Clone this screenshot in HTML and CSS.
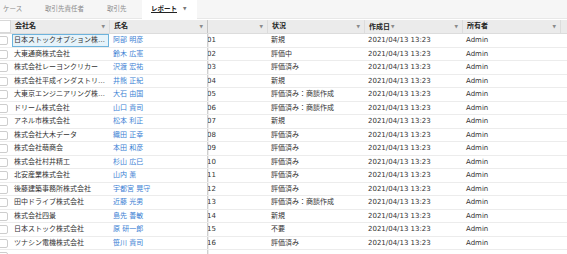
FILE: index.html
```html
<!DOCTYPE html>
<html>
	<head>
		<meta charset="UTF-8">
		<title>レポート</title>
		<link rel="stylesheet" href="styles.css">
	</head>
	<body>
		<div class="tabs">
			<span class="tab t1">ケース</span>
			<span class="tab t2">取引先責任者</span>
			<span class="tab t3">取引先</span>
			<span class="tab t4 active"><u>レポート</u><i class="caret">▼</i></span>
		</div>

		<div class="grid">
			<!-- ヘッダー -->
			<div class="row head">
				<div class="cell cb"></div>
				<div class="cell">会社名<i class="caret">▼</i></div>
				<div class="cell frozen">氏名<i class="caret">▼</i></div>
				<div class="cell"><i class="caret">▼</i></div>
				<div class="cell">状況<i class="caret">▼</i></div>
				<div class="cell">作成日<b class="sort">▼</b><i class="caret">▼</i></div>
				<div class="cell">所有者<i class="caret">▼</i></div>
				<div class="cell"></div>
			</div>

			<div class="row">
				<div class="cell cb"><span class="box"></span></div>
				<div class="cell co selected">日本ストックオプション株式会社</div>
				<div class="cell nm frozen">阿部 明彦</div>
				<div class="cell no">01</div>
				<div class="cell">新規</div>
				<div class="cell">2021/04/13 13:23</div>
				<div class="cell">Admin</div>
				<div class="cell"></div>
			</div>
			<div class="row">
				<div class="cell cb"><span class="box"></span></div>
				<div class="cell co">大東通商株式会社</div>
				<div class="cell nm frozen">鈴木 広憲</div>
				<div class="cell no">02</div>
				<div class="cell">評価中</div>
				<div class="cell">2021/04/13 13:23</div>
				<div class="cell">Admin</div>
				<div class="cell"></div>
			</div>
			<div class="row">
				<div class="cell cb"><span class="box"></span></div>
				<div class="cell co">株式会社レーヨンクリカー</div>
				<div class="cell nm frozen">沢渡 宏祐</div>
				<div class="cell no">03</div>
				<div class="cell">評価済み</div>
				<div class="cell">2021/04/13 13:23</div>
				<div class="cell">Admin</div>
				<div class="cell"></div>
			</div>
			<div class="row">
				<div class="cell cb"><span class="box"></span></div>
				<div class="cell co">株式会社平成インダストリイズ</div>
				<div class="cell nm frozen">井熊 正紀</div>
				<div class="cell no">04</div>
				<div class="cell">新規</div>
				<div class="cell">2021/04/13 13:23</div>
				<div class="cell">Admin</div>
				<div class="cell"></div>
			</div>
			<div class="row">
				<div class="cell cb"><span class="box"></span></div>
				<div class="cell co">大東京エンジニアリング株式会社</div>
				<div class="cell nm frozen">大石 由国</div>
				<div class="cell no">05</div>
				<div class="cell">評価済み：商談作成</div>
				<div class="cell">2021/04/13 13:23</div>
				<div class="cell">Admin</div>
				<div class="cell"></div>
			</div>
			<div class="row">
				<div class="cell cb"><span class="box"></span></div>
				<div class="cell co">ドリーム株式会社</div>
				<div class="cell nm frozen">山口 貴司</div>
				<div class="cell no">06</div>
				<div class="cell">評価済み：商談作成</div>
				<div class="cell">2021/04/13 13:23</div>
				<div class="cell">Admin</div>
				<div class="cell"></div>
			</div>
			<div class="row">
				<div class="cell cb"><span class="box"></span></div>
				<div class="cell co">アネル市株式会社</div>
				<div class="cell nm frozen">松本 利正</div>
				<div class="cell no">07</div>
				<div class="cell">新規</div>
				<div class="cell">2021/04/13 13:23</div>
				<div class="cell">Admin</div>
				<div class="cell"></div>
			</div>
			<div class="row">
				<div class="cell cb"><span class="box"></span></div>
				<div class="cell co">株式会社大木データ</div>
				<div class="cell nm frozen">織田 正幸</div>
				<div class="cell no">08</div>
				<div class="cell">評価済み</div>
				<div class="cell">2021/04/13 13:23</div>
				<div class="cell">Admin</div>
				<div class="cell"></div>
			</div>
			<div class="row">
				<div class="cell cb"><span class="box"></span></div>
				<div class="cell co">株式会社萌商会</div>
				<div class="cell nm frozen">本田 和彦</div>
				<div class="cell no">09</div>
				<div class="cell">評価済み</div>
				<div class="cell">2021/04/13 13:23</div>
				<div class="cell">Admin</div>
				<div class="cell"></div>
			</div>
			<div class="row">
				<div class="cell cb"><span class="box"></span></div>
				<div class="cell co">株式会社村井精工</div>
				<div class="cell nm frozen">杉山 広巳</div>
				<div class="cell no">10</div>
				<div class="cell">評価済み</div>
				<div class="cell">2021/04/13 13:23</div>
				<div class="cell">Admin</div>
				<div class="cell"></div>
			</div>
			<div class="row">
				<div class="cell cb"><span class="box"></span></div>
				<div class="cell co">北安産業株式会社</div>
				<div class="cell nm frozen">山内 薫</div>
				<div class="cell no">11</div>
				<div class="cell">評価済み</div>
				<div class="cell">2021/04/13 13:23</div>
				<div class="cell">Admin</div>
				<div class="cell"></div>
			</div>
			<div class="row">
				<div class="cell cb"><span class="box"></span></div>
				<div class="cell co">後藤建築事務所株式会社</div>
				<div class="cell nm frozen">宇都宮 晃守</div>
				<div class="cell no">12</div>
				<div class="cell">評価済み</div>
				<div class="cell">2021/04/13 13:23</div>
				<div class="cell">Admin</div>
				<div class="cell"></div>
			</div>
			<div class="row">
				<div class="cell cb"><span class="box"></span></div>
				<div class="cell co">田中ドライブ株式会社</div>
				<div class="cell nm frozen">近藤 光男</div>
				<div class="cell no">13</div>
				<div class="cell">評価済み：商談作成</div>
				<div class="cell">2021/04/13 13:23</div>
				<div class="cell">Admin</div>
				<div class="cell"></div>
			</div>
			<div class="row">
				<div class="cell cb"><span class="box"></span></div>
				<div class="cell co">株式会社四景</div>
				<div class="cell nm frozen">島先 善敏</div>
				<div class="cell no">14</div>
				<div class="cell">新規</div>
				<div class="cell">2021/04/13 13:23</div>
				<div class="cell">Admin</div>
				<div class="cell"></div>
			</div>
			<div class="row">
				<div class="cell cb"><span class="box"></span></div>
				<div class="cell co">日本ストック株式会社</div>
				<div class="cell nm frozen">原 研一郎</div>
				<div class="cell no">15</div>
				<div class="cell">不要</div>
				<div class="cell">2021/04/13 13:23</div>
				<div class="cell">Admin</div>
				<div class="cell"></div>
			</div>
			<div class="row">
				<div class="cell cb"><span class="box"></span></div>
				<div class="cell co">ツナシン電機株式会社</div>
				<div class="cell nm frozen">笹川 貴司</div>
				<div class="cell no">16</div>
				<div class="cell">評価済み</div>
				<div class="cell">2021/04/13 13:23</div>
				<div class="cell">Admin</div>
				<div class="cell"></div>
			</div>
			<div class="row">
				<div class="cell cb"><span class="box"></span></div>
				<div class="cell co"></div>
				<div class="cell nm frozen"></div>
				<div class="cell no"></div>
				<div class="cell"></div>
				<div class="cell"></div>
				<div class="cell"></div>
				<div class="cell"></div>
			</div>
		</div>
	</body>
</html>
```

FILE: styles.css
```css
* {
	margin: 0;
	padding: 0;
	box-sizing: border-box;
}
body {
	font-family: "DejaVu Sans", "Noto Sans CJK JP", sans-serif;
	font-size: 7px;
	color: #333;
	background: #fff;
	overflow: hidden;
	width: 567px;
	height: 254px;
}
i, b, u {
	font-style: normal;
}

/* タブ */
.tabs {
	display: flex;
	height: 19px;
	background: #f6f6f6;
	border-bottom: 1px solid #e8e8e8;
	margin-bottom: 1px;
}
.tab {
	display: block;
	height: 18px;
	line-height: 18px;
	font-size: 6.5px;
	color: #8c8c8c;
	white-space: nowrap;
}
.t1 { width: 42px; padding-left: 3px; }
.t2 { width: 60px; padding-left: 3px; }
.t3 { width: 40px; padding-left: 5px; }
.t4 { width: 55px; padding-left: 9px; }
.tab.active {
	background: #fff;
	height: 19px;
	color: #222;
	font-weight: bold;
	position: relative;
}
.tab.active u {
	text-decoration: underline;
	text-underline-offset: 1px;
}
.tab.active .caret {
	position: absolute;
	left: 41px;
	top: 0;
	font-size: 4.5px;
	color: #777;
	font-weight: normal;
}

/* グリッド */
.grid {
	width: 600px;
}
.row {
	display: grid;
	grid-template-columns: 11px 99px 98px 60px 97px 98px 98px 39px;
	height: 13.5px;
	border-bottom: 1px solid #ececec;
}
.cell {
	position: relative;
	min-width: 0;
	overflow: hidden;
	white-space: nowrap;
	text-overflow: ellipsis;
	padding: 0 3px;
	line-height: 12.5px;
}
.frozen {
	border-right: 1px solid #cfcfcf;
	box-shadow: 1px 0 0 #ececec;
}

.row.head {
	height: 14px;
	background: #ebebeb;
	border-bottom: 1px solid #dcdcdc;
}
.head .cell {
	font-weight: bold;
	color: #222;
	line-height: 13px;
	border-right: 1px solid #dcdcdc;
	padding-left: 4px;
}
.head .cell.cb {
	background: #fff;
	border: 1px solid #d8d8d8;
	border-left: none;
}
.head .frozen {
	border-right: 1px solid #c4c4c4;
}
.caret {
	position: absolute;
	right: 4px;
	top: 0;
	font-size: 4.5px;
	color: #8a8a8a;
	font-weight: normal;
}
.sort {
	font-size: 4.5px;
	color: #8a8a8a;
	font-weight: normal;
	vertical-align: 1px;
	margin-left: 1px;
}

.cb {
	padding: 0;
}
.box {
	display: block;
	width: 10px;
	height: 9px;
	margin: 2px 0 0 -2px;
	border: 1px solid #cdcdcd;
	border-radius: 2px;
	background: #fff;
}
.co {
	color: #333;
}
.nm {
	color: #3b7fd4;
}
.no {
	text-indent: -1px;
	padding-left: 0;
}
.selected {
	background: #e6f3fa;
	box-shadow: inset 0 0 0 1px #6db3dc;
	margin: 0 1px 0 1px;
	padding-left: 2px;
}
```
